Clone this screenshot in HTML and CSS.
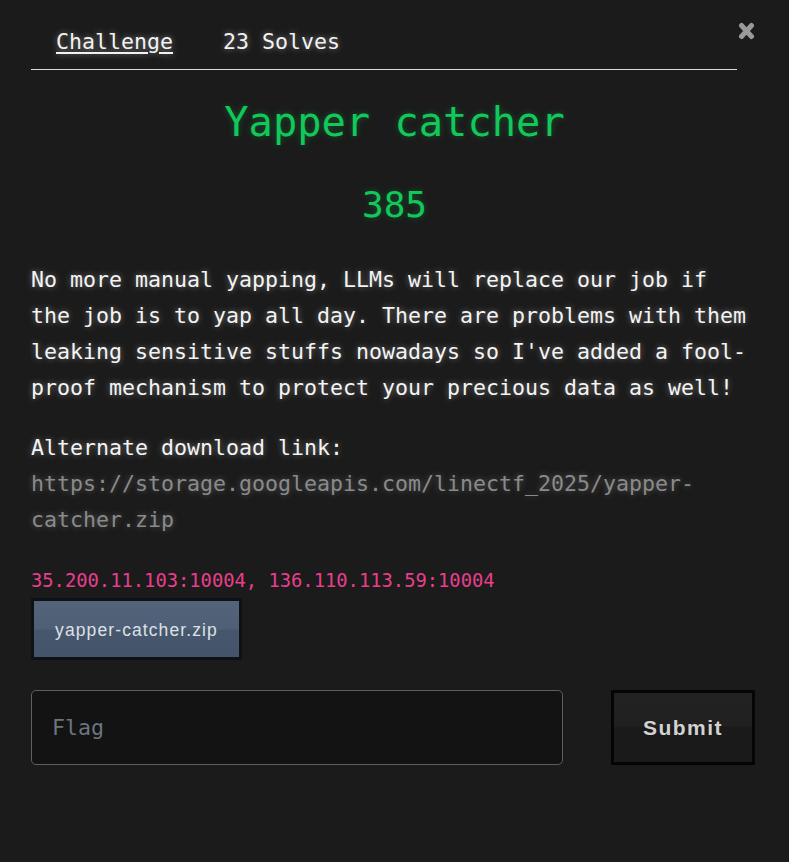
FILE: index.html
```html
<!DOCTYPE html>
<html lang="en">
<head>
<meta charset="utf-8">
<title>Yapper catcher</title>
<link rel="stylesheet" href="styles.css">
</head>
<body>
<div class="modal">
  <button class="close" aria-label="Close">
    <svg width="17" height="18" viewBox="0 0 17 18"><path d="M3.5 3.5 L13.5 14.5 M13.5 3.5 L3.5 14.5" stroke="#9a9a9a" stroke-width="5" stroke-linecap="round"/></svg>
  </button>
  <nav class="tabs">
    <a class="tab active" href="#">Challenge</a>
    <a class="tab" href="#">23 Solves</a>
  </nav>
  <h1 class="title">Yapper catcher</h1>
  <h2 class="value">385</h2>
  <div class="desc">
    <p class="para">No more manual yapping, LLMs will replace our job if the job is to yap all day. There are problems with them leaking sensitive stuffs nowadays so I've added a fool-proof mechanism to protect your precious data as well!</p>
    <p class="para">Alternate download link:<br><a class="link" href="#">https://storage.googleapis.com/linectf_2025/yapper-catcher.zip</a></p>
    <p class="conn"><code class="code">35.200.11.103:10004, 136.110.113.59:10004</code></p>
  </div>
  <a class="file-btn" href="#">yapper-catcher.zip</a>
  <form class="flag-row">
    <input class="flag-input" type="text" placeholder="Flag">
    <button class="submit" type="button">Submit</button>
  </form>
</div>
</body>
</html>
```

FILE: styles.css
```css
html, body {
  margin: 0;
  padding: 0;
  background: #1b1b1b;
}
body {
  font-family: "DejaVu Sans Mono", "Liberation Mono", monospace;
  color: #f2f2f2;
}
.modal {
  position: relative;
  width: 727px;
  padding-left: 31px;
  padding-bottom: 40px;
}
.close {
  position: absolute;
  left: 738px;
  top: 22px;
  padding: 0;
  margin: 0;
  border: 0;
  background: none;
  width: 17px;
  height: 18px;
  display: block;
}
.close svg { display: block; }
.tabs {
  width: 706px;
  display: flex;
  padding-top: 24px;
  padding-bottom: 9px;
  border-bottom: 1px solid #dcdcdc;
}
.tab {
  font-size: 21.6px;
  line-height: 36px;
  padding: 0 25px;
  color: #f2f2f2;
  text-decoration: none;
  text-shadow: 0 0 6px rgba(255,255,255,0.45);
}
.tab.active {
  text-decoration: underline;
  text-underline-offset: 3px;
  text-decoration-thickness: 2px;
}
.title {
  margin: 28px 0 0;
  font-size: 40.4px;
  line-height: 48px;
  font-weight: normal;
  text-align: center;
  color: #12c85a;
  text-shadow: 0 0 6px rgba(18,200,90,0.35);
}
.value {
  margin: 37px 0 0;
  font-size: 36px;
  line-height: 44px;
  font-weight: normal;
  text-align: center;
  color: #12c85a;
  text-shadow: 0 0 6px rgba(18,200,90,0.35);
}
.desc {
  width: 722px;
  margin-top: 35px;
}
.para {
  margin: 0 0 24px;
  font-size: 21.6px;
  line-height: 36px;
  color: #f4f4f4;
  text-shadow: 0 0 6px rgba(255,255,255,0.4);
}
.link {
  color: #8a8a8a;
  text-decoration: none;
  text-shadow: 0 0 6px rgba(200,200,200,0.35);
}
.conn {
  margin: 31px 0 0;
  line-height: 24px;
}
.code {
  font-family: "DejaVu Sans Mono", "Liberation Mono", monospace;
  font-size: 18.8px;
  color: #e83e8c;
}
.file-btn {
  display: flex;
  align-items: center;
  justify-content: center;
  box-sizing: border-box;
  width: 211px;
  height: 62px;
  margin-top: 4px;
  border: 3px solid #0e1216;
  background: linear-gradient(#53637a 0%, #4f5f76 50%, #46566c 52%, #44546a 100%);
  font-family: "Liberation Sans", Arial, sans-serif;
  font-size: 17.5px;
  letter-spacing: 1.1px;
  color: #dde1e6;
  text-decoration: none;
  padding-top: 2px;
}
.flag-row {
  display: flex;
  align-items: stretch;
  margin: 30px 0 0;
  width: 724px;
  justify-content: space-between;
}
.flag-input {
  box-sizing: border-box;
  width: 532px;
  height: 75px;
  margin: 0;
  padding: 0 20px;
  border: 1px solid #5e5e5e;
  border-radius: 5px;
  background: #131313;
  color: #eee;
  font-family: "DejaVu Sans Mono", "Liberation Mono", monospace;
  font-size: 21.6px;
  outline: none;
}
.flag-input::placeholder {
  color: #6c757d;
}
.submit {
  box-sizing: border-box;
  width: 144px;
  height: 75px;
  margin: 0;
  padding: 0;
  border: 3px solid #050505;
  background: linear-gradient(#222222 0%, #202020 48%, #1a1a1a 50%, #1a1a1a 100%);
  color: #d2d2d2;
  font-family: "Liberation Sans", Arial, sans-serif;
  font-weight: bold;
  font-size: 21px;
  letter-spacing: 1.5px;
}
```
